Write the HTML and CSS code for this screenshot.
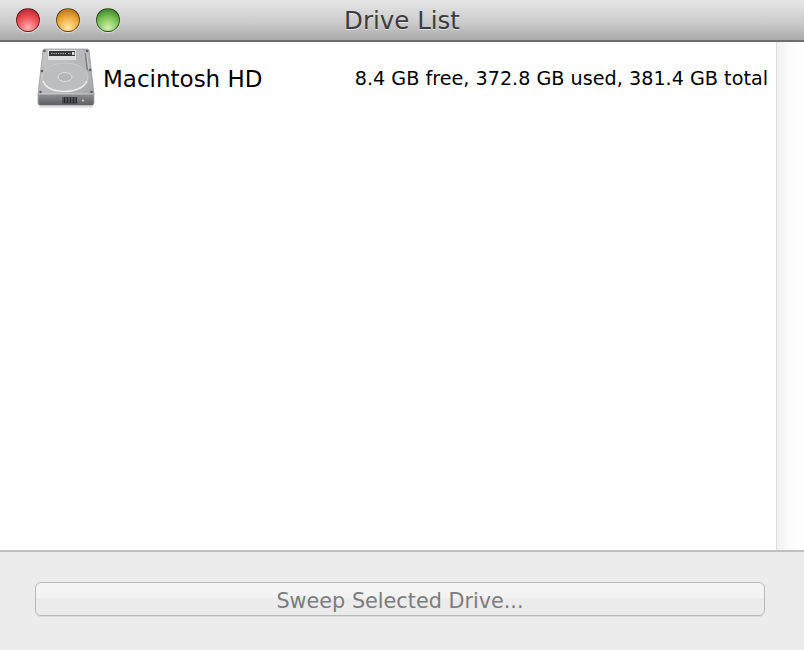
FILE: index.html
```html
<!DOCTYPE html>
<html>
<head>
  <meta charset="UTF-8">
  <title>Drive List</title>
  <link rel="stylesheet" href="styles.css">
</head>
<body>
  <div class="titlebar">
    <div class="lights">
      <span class="light light-red"></span>
      <span class="light light-yellow"></span>
      <span class="light light-green"></span>
    </div>
    <div class="title">Drive List</div>
  </div>

  <div class="content">
    <div class="list">
      <div class="drive-row">
        <svg class="drive-icon" width="58" height="60" viewBox="0 0 58 60">
          <defs>
            <linearGradient id="plate" x1="0" y1="0" x2="1" y2="1">
              <stop offset="0" stop-color="#c4c5c7"/>
              <stop offset="0.55" stop-color="#b5b6b8"/>
              <stop offset="1" stop-color="#a2a3a5"/>
            </linearGradient>
            <linearGradient id="front" x1="0" y1="0" x2="0" y2="1">
              <stop offset="0" stop-color="#8e8f92"/>
              <stop offset="1" stop-color="#5f6063"/>
            </linearGradient>
          </defs>
          <path d="M2 52 L2 58 Q2 59.500 4 59.500 L54 59.500 Q56 59.500 56 58 L56 52 Z" fill="#000" opacity="0.15"/>
          <path d="M6 2 Q6.500 1 8 1 L50 1 Q51.500 1 52 2 L57 46 L57 55 Q57 57 55 57 L3 57 Q1 57 1 55 L1 46 Z" fill="url(#plate)" stroke="#85868a" stroke-width="0.6"/>
          <path d="M1.500 46 L56.500 46 L56.500 55 Q56.500 57 54.500 57 L3.500 57 Q1.500 57 1.500 55 Z" fill="url(#front)"/>
          <path d="M1.500 46 L56.500 46" stroke="#d6d7d9" stroke-width="0.8"/>
          <rect x="11" y="2" width="28" height="10" fill="#dfe0e2"/>
          <rect x="12" y="3" width="26" height="5" fill="#36373a"/>
          <path d="M14 5.500 H29 M31 5.500 H34" stroke="#a5a6a9" stroke-width="1.200" stroke-dasharray="1.500 0.800"/>
          <rect x="35" y="4" width="2.500" height="3" fill="#e0e0e0"/>
          <ellipse cx="28" cy="29" rx="23" ry="14" fill="#bcbdbf" stroke="#cfd0d2" stroke-width="0.8"/>
          <path d="M6 33 C9 41 19 43.500 28 43.500 C38 43.500 47 40 50 33" fill="none" stroke="#eeeeef" stroke-width="1.400"/>
          <ellipse cx="28" cy="29" rx="7" ry="4.500" fill="#b4b5b7" stroke="#e2e3e4" stroke-width="0.9"/>
          <path d="M48.500 5 L50.500 22" stroke="#808184" stroke-width="1.800"/>
          <path d="M49.700 5 L51.700 22" stroke="#dadbdc" stroke-width="0.700"/>
          <circle cx="7.500" cy="3" r="1.300" fill="#5d5e62"/>
          <circle cx="50" cy="3" r="1.300" fill="#5d5e62"/>
          <circle cx="5" cy="23" r="1.300" fill="#5d5e62"/>
          <circle cx="53" cy="22" r="1.300" fill="#5d5e62"/>
          <circle cx="3.500" cy="44" r="1.300" fill="#5d5e62"/>
          <circle cx="54.500" cy="44" r="1.300" fill="#5d5e62"/>
          <path d="M26 49 V55.500 M27.500 49 V55.500 M29 49 V55.500 M30.500 49 V55.500 M32 49 V55.500 M33.500 49 V55.500 M35 49 V55.500 M36.500 49 V55.500 M38 49 V55.500 M39.500 49 V55.500" stroke="#1e1f21" stroke-width="0.900"/>
          <circle cx="46" cy="52.500" r="1.100" fill="#e0d68e"/>
        </svg>
        <span class="drive-name">Macintosh HD</span>
        <span class="drive-info">8.4 GB free, 372.8 GB used, 381.4 GB total</span>
      </div>
    </div>
    <div class="scroll-track"></div>
  </div>

  <div class="footer">
    <button class="sweep-btn" disabled>Sweep Selected Drive...</button>
  </div>
</body>
</html>
```

FILE: styles.css
```css
html, body {
  height: 100%;
}

body {
  margin: 0;
  display: flex;
  flex-direction: column;
  height: 100vh;
  overflow: hidden;
  font-family: "DejaVu Sans", sans-serif;
  background: #fff;
  color: #000;
}

.titlebar {
  position: relative;
  flex: none;
  height: 40px;
  display: flex;
  align-items: center;
  justify-content: center;
  background: linear-gradient(#e6e6e6, #c9c9c9 60%, #a9a9a9);
  border-bottom: 2px solid #6e6e6e;
}

.lights {
  position: absolute;
  left: 16px;
  top: 8px;
  display: flex;
  gap: 16px;
}

.light {
  width: 24px;
  height: 24px;
  box-sizing: border-box;
  border-radius: 50%;
  border: 1px solid rgba(0, 0, 0, 0.5);
  box-shadow: 0 1px 1px rgba(255, 255, 255, 0.6);
}

.light-red {
  background: radial-gradient(circle at 50% 85%, #ffb0b4 0, #ee4f56 50%, #b8222a 90%);
}

.light-yellow {
  background: radial-gradient(circle at 50% 85%, #ffe9a0 0, #eda93c 50%, #ad6f14 90%);
}

.light-green {
  background: radial-gradient(circle at 50% 85%, #d4f2b0 0, #7cc254 50%, #367d24 90%);
}

.title {
  font-size: 24.500px;
  color: #3c3c3c;
  text-shadow: 0 1px 0 rgba(255, 255, 255, 0.5);
}

.content {
  flex: 1;
  display: flex;
  min-height: 0;
}

.list {
  flex: 1;
  background: #fff;
}

.drive-row {
  display: flex;
  align-items: center;
  height: 70px;
  padding: 0 8px 0 37px;
}

.drive-icon {
  flex: none;
  margin-right: 8px;
  margin-top: 2px;
}

.drive-name {
  font-size: 23px;
  margin-top: 4px;
}

.drive-info {
  margin-left: auto;
  font-size: 19.200px;
  margin-top: 2px;
}

.scroll-track {
  flex: none;
  width: 27px;
  background: linear-gradient(to right, #f0f0f0, #fafafa 40%, #fff);
  border-left: 1px solid #dcdcdc;
}

.footer {
  flex: none;
  height: 100px;
  box-sizing: border-box;
  padding: 30px 39px 0 35px;
  background: #ececec;
  border-top: 2px solid #bfbfbf;
}

.sweep-btn {
  display: block;
  width: 100%;
  height: 34px;
  padding: 3px 0 0;
  font-family: inherit;
  font-size: 20.750px;
  color: #7c7c7c;
  border: 1px solid #b8b8b8;
  border-radius: 6px;
  background: linear-gradient(#f5f5f5 0, #f3f3f3 45%, #ebebeb 50%, #ebebeb 100%);
  box-shadow: 0 1px 0 rgba(0, 0, 0, 0.08);
}
```
